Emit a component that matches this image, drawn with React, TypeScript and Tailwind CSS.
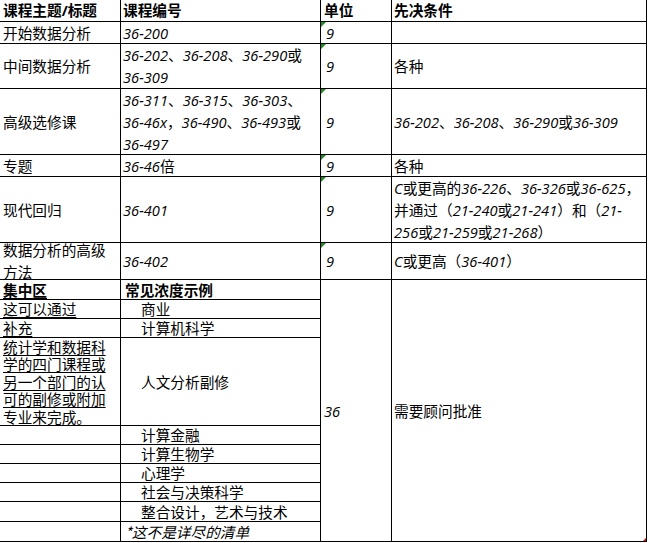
import React from "react";

const FONT = "font-['Open_Sans','Noto_Sans_CJK_SC',sans-serif]";

function Mix({ s }: { s: string }) {
  const parts = s.split(/([\x21-\x7e]+)/);
  return (
    <>
      {parts.map((p, i) =>
        /^[\x21-\x7e]+$/.test(p) ? (
          <i key={i} className="italic">
            {p}
          </i>
        ) : (
          <span key={i}>{p}</span>
        )
      )}
    </>
  );
}

function Lines({ lines }: { lines: string[] }) {
  return (
    <div className="leading-[22px]">
      {lines.map((l, i) => (
        <div key={i} className="whitespace-nowrap">
          <Mix s={l} />
        </div>
      ))}
    </div>
  );
}

function Tri() {
  return (
    <span className="absolute left-0 top-0 w-0 h-0 border-t-[5px] border-t-[#1f8a1f] border-r-[5px] border-r-transparent" />
  );
}

type Row = { a: string[]; b: string[]; c: string; d: string[] };

const upper: Row[] = [
  { a: ["开始数据分析"], b: ["36-200"], c: "9", d: [] },
  { a: ["中间数据分析"], b: ["36-202、36-208、36-290或", "36-309"], c: "9", d: ["各种"] },
  {
    a: ["高级选修课"],
    b: ["36-311、36-315、36-303、", "36-46x，36-490、36-493或", "36-497"],
    c: "9",
    d: ["36-202、36-208、36-290或36-309"],
  },
  { a: ["专题"], b: ["36-46倍"], c: "9", d: ["各种"] },
  {
    a: ["现代回归"],
    b: ["36-401"],
    c: "9",
    d: ["C或更高的36-226、36-326或36-625，", "并通过（21-240或21-241）和（21-", "256或21-259或21-268）"],
  },
  { a: ["数据分析的高级", "方法"], b: ["36-402"], c: "9", d: ["C或更高（36-401）"] },
];

const examples = ["计算金融", "计算生物学", "心理学", "社会与决策科学", "整合设计，艺术与技术"];

export default function App() {
  return (
    <div className={`w-[648px] h-[543px] bg-white text-black ${FONT}`}>
      <div className="grid w-[647px] grid-cols-[120px_199px_70px_254px] grid-rows-[21px_21px_44px_65px_21px_65px_36px_19px_18px_18px_87px_18px_18px_18px_18px_19px_19px] gap-px bg-black pr-px pb-px text-[14.67px]">
        {/* header */}
        <div className="bg-white flex items-center pl-[3px] font-bold leading-[21px] whitespace-nowrap">课程主题/标题</div>
        <div className="bg-white flex items-center pl-[2px] font-bold leading-[21px]">课程编号</div>
        <div className="bg-white flex items-center pl-[3px] font-bold leading-[21px]">单位</div>
        <div className="bg-white flex items-center pl-[2px] font-bold leading-[21px]">先决条件</div>

        {upper.map((r, i) => (
          <React.Fragment key={i}>
            <div className="bg-white flex items-center pl-[3px] overflow-hidden">
              <Lines lines={r.a} />
            </div>
            <div className="bg-white flex items-center pl-[2px] overflow-hidden">
              <Lines lines={r.b} />
            </div>
            <div className="bg-white flex items-center pl-[5px] relative">
              <Tri />
              <i className="italic leading-[22px]">{r.c}</i>
            </div>
            <div className="bg-white flex items-center pl-[2px] overflow-hidden">
              <Lines lines={r.d} />
            </div>
          </React.Fragment>
        ))}

        {/* lower section */}
        <div className="bg-white flex items-center pl-[3px] font-bold leading-[18px] font-['Noto_Sans_CJK_SC',sans-serif]">
          <span className="underline underline-offset-2">集中区</span>
        </div>
        <div className="bg-white flex items-center pl-[4px] font-bold leading-[18px] font-['Noto_Sans_CJK_SC',sans-serif]">常见浓度示例</div>
        <div className="bg-white row-span-10 flex items-center pl-[3px]">
          <i className="italic leading-[22px]">36</i>
        </div>
        <div className="bg-white row-span-10 flex items-center pl-[2px] relative font-['Noto_Sans_CJK_SC',sans-serif]">
          <span className="leading-[22px]">需要顾问批准</span>
          <span className="absolute right-0 bottom-0 w-0 h-0 border-b-[3px] border-b-[#e00000] border-l-[3px] border-l-transparent" />
        </div>

        <div className="bg-white flex items-center pl-[3px] leading-[18px] font-['Noto_Sans_CJK_SC',sans-serif]">
          <span className="underline underline-offset-2">这可以通过</span>
        </div>
        <div className="bg-white flex items-center pl-[20px] leading-[18px] font-['Noto_Sans_CJK_SC',sans-serif]">商业</div>

        <div className="bg-white flex items-center pl-[3px] leading-[18px] font-['Noto_Sans_CJK_SC',sans-serif]">
          <span className="underline underline-offset-2">补充</span>
        </div>
        <div className="bg-white flex items-center pl-[20px] leading-[18px] font-['Noto_Sans_CJK_SC',sans-serif]">计算机科学</div>

        <div className="bg-white pl-[3px] leading-[17.4px] font-['Noto_Sans_CJK_SC',sans-serif] overflow-hidden">
          {["统计学和数据科", "学的四门课程或", "另一个部门的认", "可的副修或附加", "专业来完成。"].map((l, i) => (
            <div key={i} className="whitespace-nowrap">
              <span className="underline underline-offset-2">{l}</span>
            </div>
          ))}
        </div>
        <div className="bg-white flex items-center pl-[20px] leading-[18px] font-['Noto_Sans_CJK_SC',sans-serif]">人文分析副修</div>

        {examples.map((e, i) => (
          <React.Fragment key={i}>
            <div className="bg-white" />
            <div className="bg-white flex items-center pl-[20px] leading-[18px] whitespace-nowrap font-['Noto_Sans_CJK_SC',sans-serif]">{e}</div>
          </React.Fragment>
        ))}
        <div className="bg-white" />
        <div className="bg-white flex items-center pl-[4px] leading-[18px] italic whitespace-nowrap font-['Noto_Sans_CJK_SC',sans-serif]">*这不是详尽的清单</div>
      </div>
    </div>
  );
}
